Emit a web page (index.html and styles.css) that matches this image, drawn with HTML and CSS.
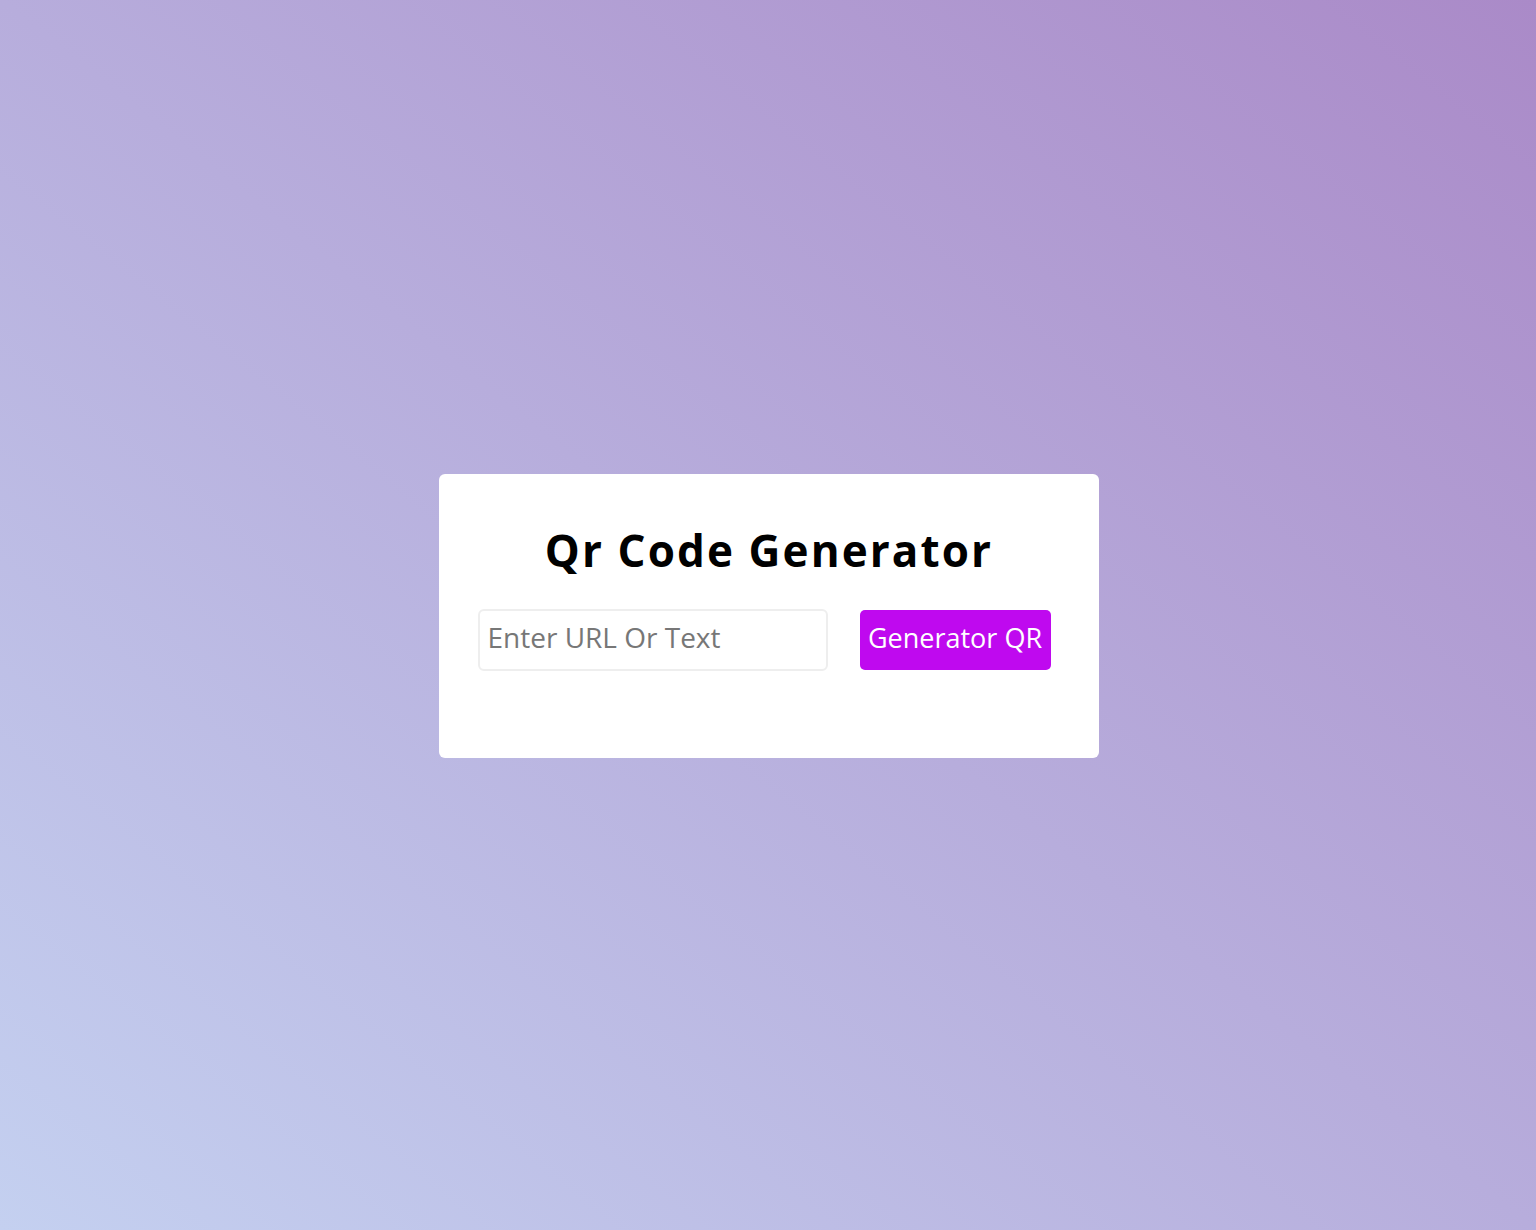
FILE: index.html
```html
<!DOCTYPE html>
<html>
<head>
<meta charset="utf-8">
<title>QR Code Generator</title>
<link rel="stylesheet" href="styles.css">
</head>
<body>
<div class="card">
  <h1 class="title">Qr Code Generator</h1>
  <div class="row">
    <input class="field" type="text" placeholder="Enter URL Or Text">
    <button class="btn">Generator QR</button>
  </div>
</div>
</body>
</html>
```
FILE: styles.css
```css
* { box-sizing: border-box; }
html, body { margin: 0; height: 100%; }
body {
  font-family: "Open Sans", "Liberation Sans", sans-serif;
  background: linear-gradient(to top right, #c4d0f0, #aa8ac8);
  display: flex;
  align-items: center;
  justify-content: center;
}
.card {
  width: 660px;
  height: 284px;
  background: #fff;
  border-radius: 6px;
  padding: 39px 47px 0 39px;
  margin: 1px 0 0 1px;
}
.title {
  margin: 5px 0 27px;
  text-align: center;
  font-size: 44px;
  font-weight: 700;
  letter-spacing: 2.1px;
  line-height: 64px;
  padding-left: 9px;
}
.row {
  display: flex;
  align-items: center;
  gap: 32px;
}
.field {
  width: 350px;
  height: 62px;
  border: 2px solid #eee;
  border-radius: 6px;
  padding: 0 8px 5px;
  font-family: inherit;
  font-size: 28px;
  color: #333;
  outline: none;
}
.field::placeholder { color: #777; }
.btn {
  width: 191px;
  height: 60px;
  border: none;
  border-radius: 5px;
  background: #bf09ef;
  color: #fff;
  font-family: inherit;
  font-size: 27px;
  padding: 0 0 5px;
}
```
